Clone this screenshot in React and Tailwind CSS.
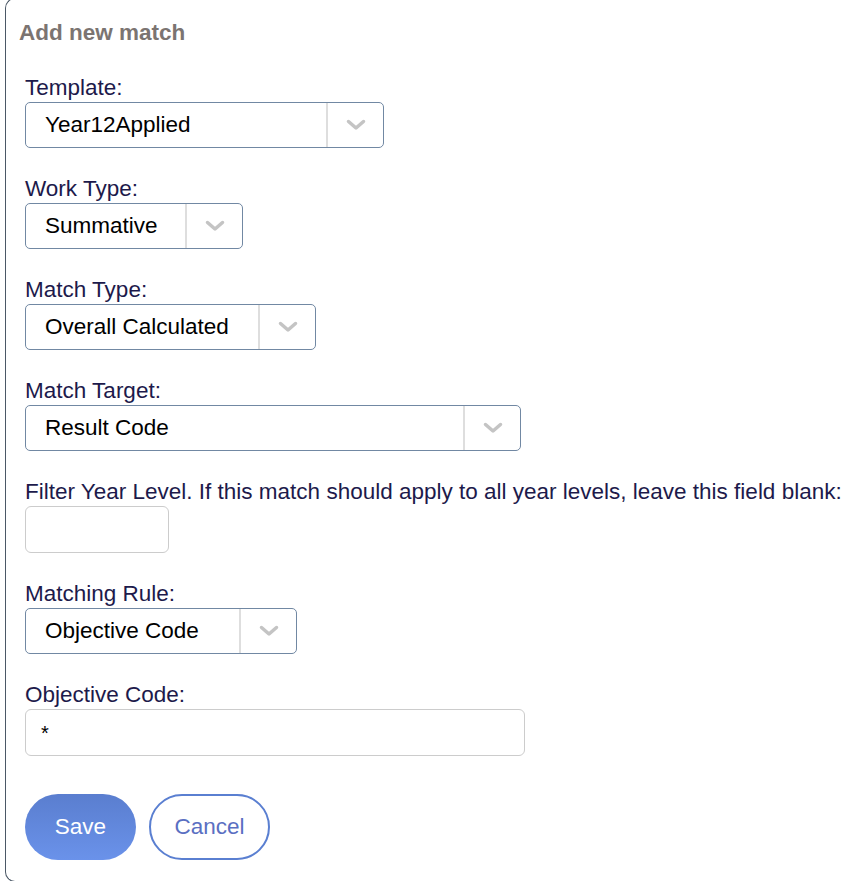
import React from "react";

function Chevron() {
  return (
    <svg width="20" height="12" viewBox="0 0 20 12" fill="none">
      <path d="M2.5 2.5 L10 9 L17.5 2.5" stroke="#c4c4c4" strokeWidth="3.5" strokeLinecap="round" strokeLinejoin="round" />
    </svg>
  );
}

function Select({ value, width, textWidth }) {
  return (
    <div className={`flex h-[46px] items-stretch rounded-[5px] border border-[#7188a3] bg-white ${width}`}>
      <div className={`flex items-center pl-[19px] text-[22.5px] text-black ${textWidth}`}>{value}</div>
      <div className="flex flex-1 items-center justify-center border-l-2 border-[#dedede]">
        <Chevron />
      </div>
    </div>
  );
}

function Field({ label, children }) {
  return (
    <div className="mb-[30px]">
      <div className="h-[25px] whitespace-nowrap pb-[4px] text-[22.5px] leading-[21px] text-[#1d1a4b]">{label}</div>
      {children}
    </div>
  );
}

export default function App() {
  return (
    <div className="h-[881px] overflow-hidden bg-white pl-[5px] font-['Liberation_Sans',Arial,sans-serif]">
      <div className="-mt-[2px] h-[884px] rounded-l-[10px] border border-r-0 border-[#4b5866] pl-[13px] pt-[20px]">
        <h2 className="text-[22.5px] font-bold leading-[28px] text-[#7b7471]">Add new match</h2>
        <div className="pl-[6px] pt-[30px]">
          <Field label="Template:">
            <Select value="Year12Applied" width="w-[359px]" textWidth="w-[300px]" />
          </Field>
          <Field label="Work Type:">
            <Select value="Summative" width="w-[218px]" textWidth="w-[159px]" />
          </Field>
          <Field label="Match Type:">
            <Select value="Overall Calculated" width="w-[291px]" textWidth="w-[232px]" />
          </Field>
          <Field label="Match Target:">
            <Select value="Result Code" width="w-[496px]" textWidth="w-[437px]" />
          </Field>
          <Field label="Filter Year Level. If this match should apply to all year levels, leave this field blank:">
            <div className="h-[47px] w-[144px] rounded-[6px] border border-[#cccccc] bg-white" />
          </Field>
          <Field label="Matching Rule:">
            <Select value="Objective Code" width="w-[272px]" textWidth="w-[213px]" />
          </Field>
          <Field label="Objective Code:">
            <div className="flex h-[47px] w-[500px] items-start rounded-[6px] border border-[#cccccc] bg-white pl-[15px] pt-[8px] text-[20px] text-black">
              *
            </div>
          </Field>
          <div className="flex gap-[13px] pt-[8px]">
            <button className="h-[66px] w-[111px] rounded-full bg-gradient-to-b from-[#5a7ecf] to-[#6a92ea] text-[22.5px] text-white">
              Save
            </button>
            <button className="h-[66px] w-[121px] rounded-full border-2 border-[#5a7fd1] bg-white text-[22.5px] text-[#5a6fc2]">
              Cancel
            </button>
          </div>
        </div>
      </div>
    </div>
  );
}
